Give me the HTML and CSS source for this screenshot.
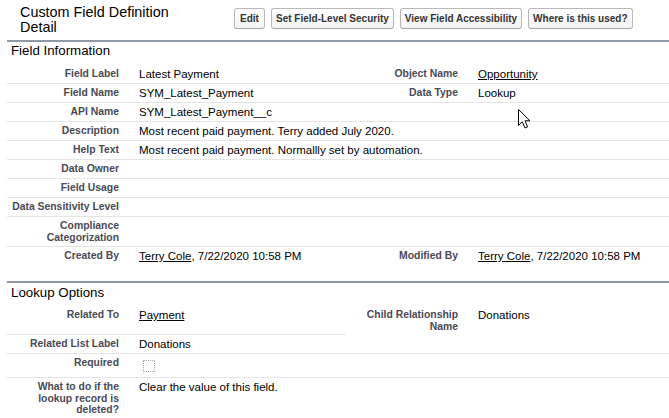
FILE: index.html
```html
<!DOCTYPE html>
<html lang="en">
<head>
<meta charset="utf-8">
<title>Custom Field Definition Detail</title>
<link rel="stylesheet" href="styles.css">
</head>
<body>
<div class="page">
  <div class="page-header">
    <h2 class="page-title">Custom Field Definition Detail</h2>
    <div class="buttons">
      <button class="btn btn-edit">Edit</button>
      <button class="btn">Set Field-Level Security</button>
      <button class="btn">View Field Accessibility</button>
      <button class="btn">Where is this used?</button>
    </div>
  </div>

  <section class="section">
    <h3 class="section-title">Field Information</h3>
    <div class="row">
      <div class="label">Field Label</div><div class="value">Latest Payment</div>
      <div class="label">Object Name</div><div class="value"><a class="link">Opportunity</a></div>
    </div>
    <div class="row">
      <div class="label">Field Name</div><div class="value">SYM_Latest_Payment</div>
      <div class="label">Data Type</div><div class="value">Lookup</div>
    </div>
    <div class="row">
      <div class="label">API Name</div><div class="value">SYM_Latest_Payment__c</div>
      <div class="label"></div><div class="value"></div>
    </div>
    <div class="row">
      <div class="label">Description</div><div class="value span3">Most recent paid payment. Terry added July 2020.</div>
    </div>
    <div class="row">
      <div class="label">Help Text</div><div class="value span3">Most recent paid payment. Normallly set by automation.</div>
    </div>
    <div class="row">
      <div class="label">Data Owner</div><div class="value"></div>
      <div class="label"></div><div class="value"></div>
    </div>
    <div class="row">
      <div class="label">Field Usage</div><div class="value"></div>
      <div class="label"></div><div class="value"></div>
    </div>
    <div class="row">
      <div class="label">Data Sensitivity Level</div><div class="value"></div>
      <div class="label"></div><div class="value"></div>
    </div>
    <div class="row">
      <div class="label">Compliance Categorization</div><div class="value"></div>
      <div class="label"></div><div class="value"></div>
    </div>
    <div class="row last">
      <div class="label">Created By</div><div class="value"><a class="link">Terry Cole</a>, 7/22/2020 10:58 PM</div>
      <div class="label">Modified By</div><div class="value"><a class="link">Terry Cole</a>, 7/22/2020 10:58 PM</div>
    </div>
  </section>

  <section class="section section-lookup">
    <h3 class="section-title">Lookup Options</h3>
    <div class="row">
      <div class="label">Related To</div><div class="value"><a class="link">Payment</a></div>
      <div class="label no-border">Child Relationship Name</div><div class="value no-border">Donations</div>
    </div>
    <div class="row">
      <div class="label">Related List Label</div><div class="value">Donations</div>
      <div class="label"></div><div class="value"></div>
    </div>
    <div class="row">
      <div class="label">Required</div><div class="value"><span class="checkbox"></span></div>
      <div class="label"></div><div class="value"></div>
    </div>
    <div class="row last">
      <div class="label">What to do if the lookup record is deleted?</div><div class="value">Clear the value of this field.</div>
      <div class="label"></div><div class="value"></div>
    </div>
  </section>
</div>

<svg class="cursor" width="14" height="21" viewBox="0 0 14 21" aria-hidden="true">
  <path d="M0.5 0.5 L0.5 16.5 L4.3 12.8 L7 19 L9.6 17.9 L7 11.8 L12 11.8 Z" fill="#ffffff" stroke="#000000" stroke-width="1" stroke-linejoin="round"/>
</svg>
</body>
</html>
```

FILE: styles.css
```css
html, body {
  margin: 0;
  padding: 0;
  background: #ffffff;
  overflow: hidden;
}

body {
  font-family: "Liberation Sans", Arial, sans-serif;
  color: #000000;
  width: 669px;
  height: 418px;
  position: relative;
}

.page {
  margin-left: 7px;
}

.page-header {
  display: flex;
  align-items: flex-start;
  height: 40px;
}

.page-title {
  box-sizing: border-box;
  width: 227px;
  margin: 0;
  padding: 5px 40px 0 13px;
  font-size: 14.4px;
  line-height: 15px;
  font-weight: normal;
  color: #000000;
}

.buttons {
  display: flex;
  gap: 6px;
  padding-top: 8px;
}

.btn {
  box-sizing: border-box;
  height: 21px;
  padding: 0 4px;
  font-family: "Liberation Sans", Arial, sans-serif;
  font-size: 10px;
  font-weight: bold;
  color: #333333;
  background: linear-gradient(#ffffff, #f4f4f4);
  border: 1px solid #b8b8b8;
  border-bottom-color: #a5a5a5;
  border-radius: 3px;
  cursor: pointer;
}

.btn-edit {
  min-width: 31px;
}

.section {
  border-top: 2px solid #8f99a8;
}

.section-lookup {
  margin-top: 16px;
}

.section-title {
  margin: 0;
  padding: 1px 4px 6px;
  font-size: 13.3px;
  line-height: 16px;
  font-weight: normal;
  color: #000000;
}

.section-lookup .section-title {
  padding: 2px 4px 5px;
}

.row {
  display: grid;
  grid-template-columns: 122px 217px 122px 1fr;
}

.label,
.value {
  min-height: 12px;
  padding-top: 3px;
  padding-bottom: 3px;
  border-bottom: 1px solid #e5e5e5;
}

.label {
  padding-left: 2px;
  padding-right: 10px;
  text-align: right;
  font-size: 10.4px;
  line-height: 11.5px;
  font-weight: bold;
  color: #4a4a56;
}

.value {
  padding-left: 10px;
  padding-right: 10px;
  font-size: 11.5px;
  line-height: 12px;
  color: #000000;
}

.span3 {
  grid-column: 2 / 5;
}

.row.last .label,
.row.last .value,
.no-border {
  border-bottom: none;
}

.link {
  color: #000000;
  text-decoration: underline;
}

.checkbox {
  display: block;
  box-sizing: border-box;
  width: 12px;
  height: 12px;
  margin: 3px 0 2px 4px;
  border: 1px dotted #a9a9a9;
}

.cursor {
  position: absolute;
  left: 518px;
  top: 109px;
}
```
